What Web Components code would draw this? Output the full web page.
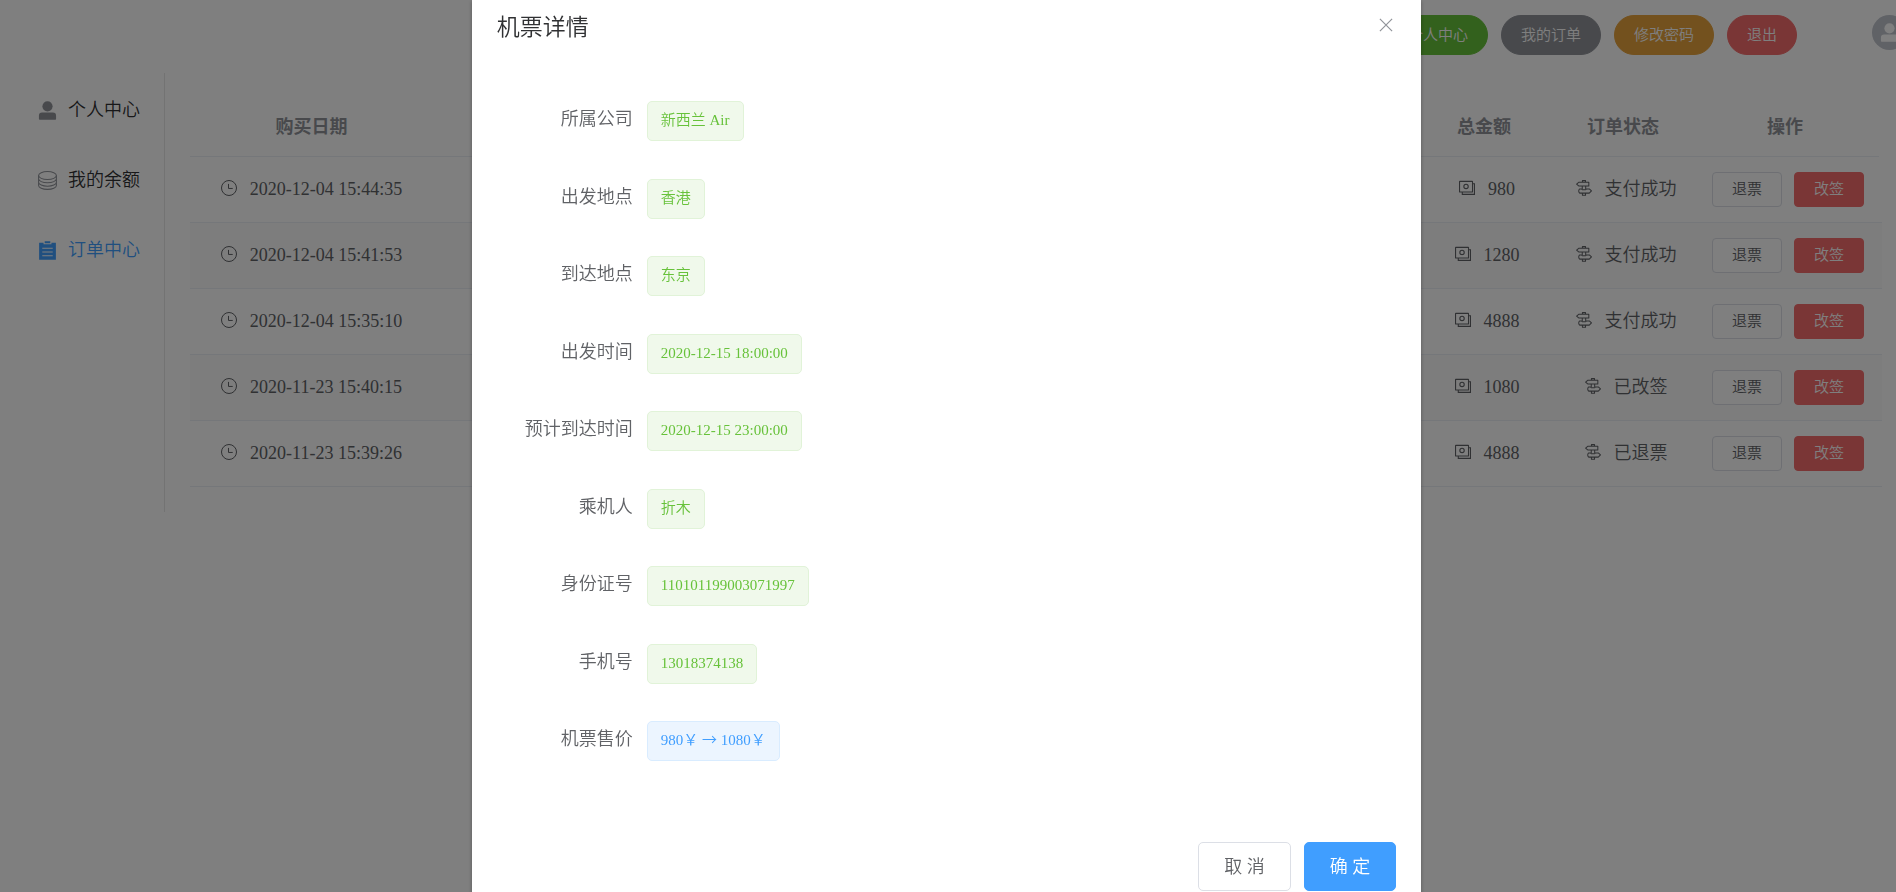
<!DOCTYPE html>
<html lang="zh-CN">
<head>
<meta charset="utf-8">
<title>订单中心</title>
<style>
  html, body { height: 100%; }
  body { margin: 0; overflow: hidden; background: #fff; color: #606266; font: 350 18px/23px "Liberation Serif", "Noto Sans CJK SC", serif; }
</style>
</head>
<body>
<ticket-app></ticket-app>

<script>
const icons = {
  user: '<circle cx="512" cy="285" r="275" fill="currentColor"/><path fill="currentColor" d="M220 620h584a170 170 0 0 1 170 170v180a40 40 0 0 1-40 40H90a40 40 0 0 1-40-40V790a170 170 0 0 1 170-170z"/>',
  coin: '<g fill="none" stroke="currentColor" stroke-width="56"><ellipse cx="512" cy="245" rx="480" ry="215"/><path d="M32 245v175c0 120 215 215 480 215s480-95 480-215V245M32 420v185c0 120 215 215 480 215s480-95 480-215V420M32 605v170c0 120 215 215 480 215s480-95 480-215V605"/></g>',
  order: '<path fill="currentColor" fill-rule="evenodd" d="M60 90h240v90h424v-90h240v924H60zM360 10h304v110H360zM230 370v46h564v-46zM230 570v46h564v-46zM230 770v46h564v-46z"/>',
  clock: '<g fill="none" stroke="currentColor" stroke-width="64"><circle cx="512" cy="512" r="480"/><path d="M480 250v290h270"/></g>',
  money: '<g fill="none" stroke="currentColor" stroke-width="70"><rect x="35" y="85" width="830" height="680" rx="20"/><circle cx="450" cy="410" r="140"/><path d="M865 240h124v680H210V765"/></g>',
  guide: '<g fill="none" stroke="currentColor" stroke-width="66" stroke-linejoin="round"><path d="M410 150V40h200v110M170 150h650v230H170L40 265zM400 380v190M620 380v190M240 570h90l70 50h220l70-50h160l140 130-140 140H240l-60-70V640zM410 840v140h200V840"/></g>',
  close: '<path fill="none" stroke="currentColor" stroke-width="60" d="M200 200l624 624M824 200L200 824"/>'
};

function define(name, css, html) {
  customElements.define(name, class extends HTMLElement {
    connectedCallback() {
      if (this.shadowRoot) return;
      const root = this.attachShadow({ mode: 'open' });
      root.innerHTML = `<style>*{box-sizing:border-box}${css}</style>` + (typeof html === 'function' ? html(this) : html);
    }
  });
}

define('ui-icon',
  ':host{display:inline-block;width:16px;height:16px;flex:none}svg{display:block;width:100%;height:100%}',
  el => `<svg viewBox="0 0 1024 1024" aria-hidden="true">${icons[el.getAttribute('name')]}</svg>`);

define('ui-button', `
  :host{display:inline-block;flex:none}
  button{display:block;margin:0;font:inherit;font-size:15px;line-height:15px;white-space:nowrap;color:#606266;background:#fff;border:1px solid #dcdfe6;border-radius:4px;padding:9px 19px;height:35px}
  :host([round]) button{border-radius:20px;height:40px}
  :host([large]) button{font-size:18px;line-height:18px;height:49px;padding:0 25px;border-radius:5px}
  :host([type]) button{color:#fff}
  :host([type=primary]) button{background-color:#409eff;border-color:#409eff}
  :host([type=success]) button{background-color:#67c23a;border-color:#67c23a}
  :host([type=info]) button{background-color:#909399;border-color:#909399}
  :host([type=warning]) button{background-color:#e6a23c;border-color:#e6a23c}
  :host([type=danger]) button{background-color:#f56c6c;border-color:#f56c6c}`,
  '<button type="button"><slot></slot></button>');

define('user-avatar', `
  :host{display:block;flex:none;width:24px}
  span{display:flex;align-items:center;justify-content:center;width:35px;height:35px;border-radius:50%;background:#c0c4cc;color:#fff}
  ui-icon{width:19px;height:19px}`,
  '<span><ui-icon name="user"></ui-icon></span>');

define('app-header', `
  :host{display:flex;justify-content:flex-end;align-items:flex-start;height:73px;padding-top:15px}
  nav{display:flex;gap:13px;margin-right:75px}`, `
  <nav>
    <ui-button round type="success">个人中心</ui-button>
    <ui-button round type="info">我的订单</ui-button>
    <ui-button round type="warning">修改密码</ui-button>
    <ui-button round type="danger">退出</ui-button>
  </nav>
  <user-avatar></user-avatar>`);

define('menu-item', `
  :host{display:block}
  a{display:flex;align-items:center;gap:11px;height:70px;padding-left:38px;color:#303133;text-decoration:none}
  ui-icon{width:19px;height:19px;color:#909399}
  :host([active]) a,:host([active]) ui-icon{color:#409eff}`,
  el => `<a href="#"><ui-icon name="${el.getAttribute('icon')}"></ui-icon><slot></slot></a>`);

define('side-menu', `
  :host{display:block;width:165px;flex:none;border-right:1px solid #e6e6e6}
  nav{padding-top:2px}`, `
  <nav>
    <menu-item icon="user">个人中心</menu-item>
    <menu-item icon="coin">我的余额</menu-item>
    <menu-item icon="order" active>订单中心</menu-item>
  </nav>`);

const orders = [
  ['2020-12-04 15:44:35', '980', '支付成功'],
  ['2020-12-04 15:41:53', '1280', '支付成功'],
  ['2020-12-04 15:35:10', '4888', '支付成功'],
  ['2020-11-23 15:40:15', '1080', '已改签'],
  ['2020-11-23 15:39:26', '4888', '已退票']
];

define('order-table', `
  :host{display:block;flex:1;min-width:0;padding:25px 14px 25px 25px}
  table{width:100%;table-layout:fixed;border-collapse:separate;border-spacing:0}
  th,td{padding:0;height:66px;text-align:center;border-bottom:1px solid #ebeef5}
  th{height:59px;color:#909399;font-weight:700}
  tr>.gutter{width:3px}
  thead .gutter{border:0}
  tbody tr:nth-child(even) td{background:#fafafa}
  .date{width:243px}.amount{width:142px}.status{width:136px}.actions{width:188px}
  .cell{display:flex;align-items:center;justify-content:center;gap:13px}
  .cell ui-icon{margin-bottom:3px}
  td.shift{padding-left:6px}
  td.actions .cell{gap:12px}`,
  `<table>
    <thead><tr><th class="date">购买日期</th><th></th><th class="amount">总金额</th><th class="status">订单状态</th><th class="actions">操作</th><th class="gutter"></th></tr></thead>
    <tbody>${orders.map(([date, amount, status]) => `<tr>
      <td><div class="cell"><ui-icon name="clock"></ui-icon>${date}</div></td>
      <td></td>
      <td class="shift"><div class="cell"><ui-icon name="money"></ui-icon>${amount}</div></td>
      <td class="shift"><div class="cell"><ui-icon name="guide"></ui-icon>${status}</div></td>
      <td class="actions shift"><div class="cell"><ui-button>退票</ui-button><ui-button type="danger">改签</ui-button></div></td>
      <td></td></tr>`).join('')}</tbody>
  </table>`);

define('ui-tag', `
  :host{display:block;height:40px;box-sizing:border-box;padding:0 13px;border:1px solid #e1f3d8;border-radius:5px;background:#f0f9eb;color:#67c23a;font-size:15px;line-height:36px;white-space:nowrap}
  :host([type=primary]){border-color:#d9ecff;background:#ecf5ff;color:#409eff}
  ::slotted(span){font-family:"Noto Sans CJK SC",sans-serif;line-height:1}`,
  '<slot></slot>');

define('detail-item', `
  :host{display:flex;align-items:flex-start;height:50px}
  .label{width:150px;padding-right:14px;text-align:right;line-height:50px}
  .value{padding-top:7px}`,
  el => `<div class="label">${el.getAttribute('label')}</div><div class="value"><slot></slot></div>`);

define('ticket-dialog', `
  :host{position:fixed;inset:0;overflow:auto;scrollbar-width:none;background:rgba(0,0,0,.5);padding-right:3px}
  section{width:calc(50% + 3px);margin:0 auto;background:#fff;box-shadow:0 1px 4px rgba(0,0,0,.3)}
  header{display:flex;justify-content:space-between;align-items:flex-start;padding:13px 25px 12px}
  h2{margin:0;font-size:23px;line-height:30px;font-weight:inherit;color:#303133}
  .close{display:block;margin:2px 0 0;padding:0;border:0;background:none;color:#909399}
  .close ui-icon{display:block;width:20px;height:20px}
  .body{display:flex;flex-direction:column;justify-content:space-between;min-height:670px;margin:39px 25px 78px}
  footer{display:flex;justify-content:flex-end;gap:13px;padding:0 25px 25px}`, `
  <section role="dialog" aria-labelledby="title">
    <header><h2 id="title">机票详情</h2><button class="close" type="button" aria-label="Close"><ui-icon name="close"></ui-icon></button></header>
    <div class="body">
      <detail-item label="所属公司"><ui-tag>新西兰 Air</ui-tag></detail-item>
      <detail-item label="出发地点"><ui-tag>香港</ui-tag></detail-item>
      <detail-item label="到达地点"><ui-tag>东京</ui-tag></detail-item>
      <detail-item label="出发时间"><ui-tag>2020-12-15 18:00:00</ui-tag></detail-item>
      <detail-item label="预计到达时间"><ui-tag>2020-12-15 23:00:00</ui-tag></detail-item>
      <detail-item label="乘机人"><ui-tag>折木</ui-tag></detail-item>
      <detail-item label="身份证号"><ui-tag>110101199003071997</ui-tag></detail-item>
      <detail-item label="手机号"><ui-tag>13018374138</ui-tag></detail-item>
      <detail-item label="机票售价"><ui-tag type="primary">980￥ <span>→</span> 1080￥</ui-tag></detail-item>
    </div>
    <footer><ui-button large>取 消</ui-button><ui-button large type="primary">确 定</ui-button></footer>
  </section>`);

define('ticket-app', `
  :host{display:block;height:100%}
  main{display:flex;align-items:stretch}`, `
  <app-header></app-header>
  <main><side-menu></side-menu><order-table></order-table></main>
  <ticket-dialog></ticket-dialog>`);
</script>
</body>
</html>
